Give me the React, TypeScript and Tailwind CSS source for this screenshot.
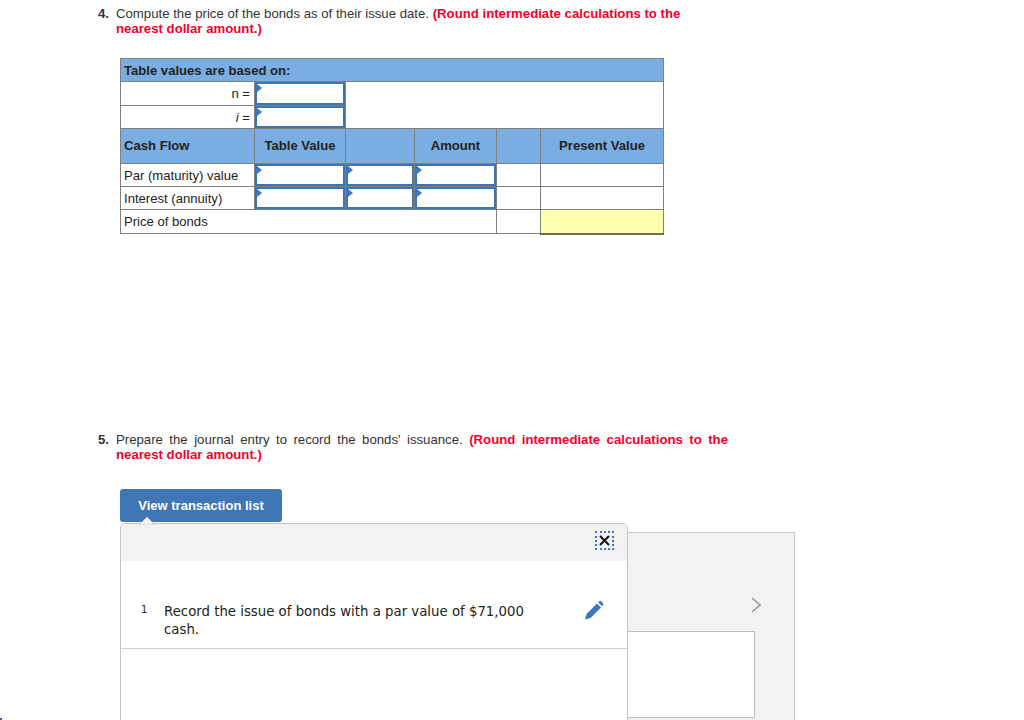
const headerCell = "border border-[#808080] bg-[#7aade1] p-0 font-bold text-[#222]";
const bodyCell = "border border-[#808080] bg-white p-0 text-[#222]";

function Marker() {
  return (
    <span className="absolute left-0 top-0 h-0 w-0 border-y-[4px] border-l-[5px] border-y-transparent border-l-[#3f78b9]" />
  );
}

function InputCell({ height }: { height: string }) {
  return (
    <td className={bodyCell}>
      <div className={`relative border-2 border-[#3f74b0] ${height}`}>
        <Marker />
      </div>
    </td>
  );
}

function Question({ num, lead, justify }: { num: string; lead: string; justify?: boolean }) {
  return (
    <div className="flex pl-[98px] text-[13.2px] leading-[15px]">
      <span className="w-[18px] font-bold text-[#333]">{num}</span>
      <p className={`w-[612px] text-[#333] ${justify ? "text-justify" : ""}`}>
        {lead}{" "}
        <b className="text-[#f5002a]">(Round intermediate calculations to the nearest dollar amount.)</b>
      </p>
    </div>
  );
}

function BondsTable() {
  return (
    <table className="ml-[120px] mt-[22px] w-[543px] table-fixed border-collapse text-[13.1px] leading-[15px]">
      <colgroup>
        <col className="w-[134px]" />
        <col className="w-[91px]" />
        <col className="w-[69px]" />
        <col className="w-[82px]" />
        <col className="w-[44px]" />
        <col className="w-[123px]" />
      </colgroup>
      <tbody>
        <tr className="h-[23px]">
          <td colSpan={6} className={`${headerCell} pl-[3px]`}>Table values are based on:</td>
        </tr>
        <tr className="h-[24px]">
          <td className={`${bodyCell} pr-[4px] text-right`}>n =</td>
          <InputCell height="h-[23px]" />
          <td colSpan={4} rowSpan={2} className={bodyCell} />
        </tr>
        <tr className="h-[23px]">
          <td className={`${bodyCell} pr-[4px] text-right`}><i>i</i> =</td>
          <InputCell height="h-[22px]" />
        </tr>
        <tr className="h-[35px]">
          <td className={`${headerCell} pb-[2px] pl-[3px]`}>Cash Flow</td>
          <td className={`${headerCell} pb-[2px] text-center`}>Table Value</td>
          <td className={headerCell} />
          <td className={`${headerCell} pb-[2px] text-center`}>Amount</td>
          <td className={headerCell} />
          <td className={`${headerCell} pb-[2px] text-center`}>Present Value</td>
        </tr>
        <tr className="h-[23px]">
          <td className={`${bodyCell} pl-[3px]`}>Par (maturity) value</td>
          <InputCell height="h-[22px]" />
          <InputCell height="h-[22px]" />
          <InputCell height="h-[22px]" />
          <td className={bodyCell} />
          <td className={bodyCell} />
        </tr>
        <tr className="h-[23px]">
          <td className={`${bodyCell} pl-[3px]`}>Interest (annuity)</td>
          <InputCell height="h-[22px]" />
          <InputCell height="h-[22px]" />
          <InputCell height="h-[22px]" />
          <td className={bodyCell} />
          <td className={bodyCell} />
        </tr>
        <tr className="h-[24px]">
          <td colSpan={4} className={`${bodyCell} pl-[3px]`}>Price of bonds</td>
          <td className={bodyCell} />
          <td className="border border-b-[2px] border-[#808080] border-b-[#6f6f55] bg-[#ffffad] p-0" />
        </tr>
      </tbody>
    </table>
  );
}

function Pencil() {
  return (
    <svg viewBox="0 0 20 20" className="h-[20px] w-[20px]">
      <path d="M1 19.5 L2.5 14 L13 3.5 L17 7.5 L6.5 18 Z" fill="#3b78bd" />
      <path d="M14.2 2.3 L15.6 1 Q16.3 0.5 17 1 L19.2 3.2 Q19.7 4 19.2 4.7 L18 6.2 Z" fill="#3b78bd" />
    </svg>
  );
}

function TransactionPopup() {
  return (
    <div className="absolute left-[120px] top-[523px] h-[260px] w-[508px] rounded-t-[5px] border border-[#c4c4c4] bg-white font-['DejaVu_Sans',sans-serif]">
      <svg viewBox="0 0 16 9" className="absolute left-[18px] top-[-8px] h-[9px] w-[16px]">
        <path d="M0 9 L8 1 L16 9 Z" fill="#f2f2f2" stroke="#c4c4c4" />
        <path d="M1 9.5 H15" stroke="#f2f2f2" strokeWidth="1.5" />
      </svg>
      <div className="flex h-[37px] items-start justify-end rounded-t-[5px] bg-[#f2f2f2] pr-[13px] pt-[7px]">
        <div className="flex h-[19px] w-[19px] items-center justify-center border-2 border-dotted border-[#3f78b9]">
          <svg viewBox="0 0 11 11" className="h-[11px] w-[11px]">
            <path d="M1 1 L10 10 M10 1 L1 10" stroke="#111" strokeWidth="2" />
          </svg>
        </div>
      </div>
      <div className="flex h-[88px] border-b border-[#cfcfcf] pl-[20px] pt-[42px] text-[13.3px] leading-[18px] text-[#222]">
        <span className="mt-[-2px] w-[23px] text-[10px] font-normal">1</span>
        <p className="w-[380px]">Record the issue of bonds with a par value of $71,000 cash.</p>
        <span className="ml-[40px] mt-[-3px]"><Pencil /></span>
      </div>
    </div>
  );
}

export default function App() {
  return (
    <div className="relative h-[720px] w-[1024px] overflow-hidden bg-white font-['Liberation_Sans',Arial,sans-serif]">
      <div className="pt-[6px]">
        <Question num="4." lead="Compute the price of the bonds as of their issue date." />
        <BondsTable />
      </div>

      <div className="mt-[197px]">
        <Question num="5." lead="Prepare the journal entry to record the bonds' issuance." justify />
      </div>

      <button className="ml-[120px] mt-[27px] flex h-[33px] w-[162px] items-center justify-center rounded-[3px] bg-[#3f76b6] pt-[2px] text-[13px] font-bold text-white">
        View transaction list
      </button>

      <div className="ml-[627px] mt-[10px] h-[300px] w-[168px] border border-[#c8c8c8] bg-[#f2f2f2] pt-[64px]">
        <div className="flex justify-end pr-[33px]">
          <svg viewBox="0 0 10 16" className="h-[16px] w-[10px]">
            <path d="M1 1 L9 8 L1 15" fill="none" stroke="#9a9a9a" strokeWidth="1.6" />
          </svg>
        </div>
        <div className="ml-[-1px] mt-[18px] h-[87px] w-[128px] border border-[#bdbdbd] bg-white" />
      </div>

      <TransactionPopup />
      <span className="absolute bottom-0 left-0 h-[2px] w-[2px] bg-[#3f5f90]" />
    </div>
  );
}
